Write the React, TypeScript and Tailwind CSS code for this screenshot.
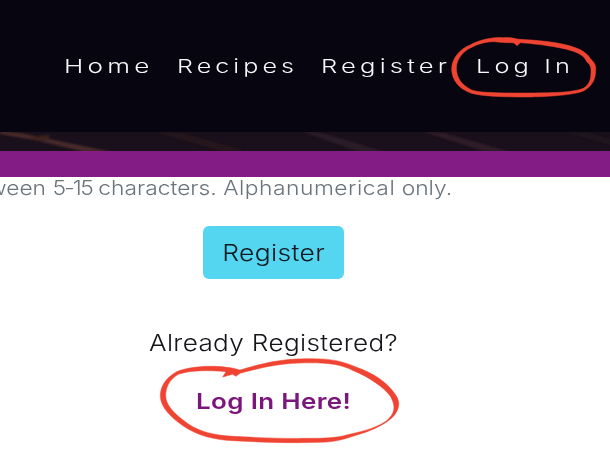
const navItem = "inline-block origin-left whitespace-nowrap tracking-[3px]";

function NavCircle() {
  return (
    <svg className="absolute left-[440px] top-[25px] h-[85px] w-[170px]" viewBox="0 0 510 255" aria-hidden="true">
      <path
        fill="#f04433"
        stroke="#f04433"
        strokeWidth="1.5"
        fillRule="evenodd"
        d="M35 135C34 100 60 72 90 60C125 42 160 36 190 38C215 36 225 42 240 43C300 46 360 52 400 66C430 75 445 90 452 102C462 112 468 118 467 135C467 165 455 185 430 198C400 210 330 215 260 216C190 216 120 214 90 203C55 190 37 165 35 135ZM49 130C50 110 58 90 85 72C115 55 140 50 165 50C190 54 210 52 222 54L231 62L241 53C300 57 370 68 400 79C425 88 435 98 440 110C450 118 454 125 453 140C453 160 450 178 430 190C400 203 330 204 260 204C190 204 120 204 95 195C65 180 50 160 49 130Z"
      />
    </svg>
  );
}

function LinkCircle() {
  return (
    <svg className="absolute left-[140px] top-[320px] h-[136px] w-[270px]" viewBox="0 0 810 408" aria-hidden="true">
      <path
        fill="#f04433"
        stroke="#f04433"
        strokeWidth="1.5"
        fillRule="evenodd"
        d="M61 225C62 200 75 175 110 155C150 138 220 136 260 142C280 144 290 148 300 150C340 138 400 120 470 117C560 113 600 120 650 142C700 160 740 185 765 222C778 240 780 255 770 275C755 305 700 330 660 342C620 355 590 366 540 367C450 370 350 366 280 362C220 360 170 345 130 318C90 290 60 260 61 225ZM77 225C78 205 85 180 115 163C150 150 210 150 258 155L248 171L278 163L288 169L300 160C350 146 410 131 480 129C560 127 600 132 640 152C690 172 735 205 752 230C768 260 765 280 740 302C700 330 650 337 620 345C590 354 550 355 500 355C420 356 330 352 280 349C220 346 180 335 145 312C100 280 77 255 77 225Z"
      />
    </svg>
  );
}

function HeroStrip() {
  return (
    <div className="h-[19px] overflow-hidden bg-[#1a101b]">
      <svg className="block h-[19px] w-[610px]" viewBox="0 0 610 19" aria-hidden="true">
        <defs>
          <filter id="soft" x="-10%" y="-50%" width="120%" height="200%">
            <feGaussianBlur stdDeviation="1.3" />
          </filter>
        </defs>
        <g filter="url(#soft)">
          <path d="M0 -1L20 1L112 20L85 20L40 9L0 2Z" fill="#482c2c" />
          <path d="M30 5L50 3L48 8L36 9Z" fill="#3d211e" />
          <path d="M155 0L185 2L245 19L222 19Z" fill="#26171f" />
          <path d="M300 -1L322 1L386 20L360 20Z" fill="#2c1b25" />
          <path d="M421 -1L444 1L512 20L486 20Z" fill="#2e1c26" />
          <path d="M565 0L588 1L620 10L620 16Z" fill="#1f131e" />
        </g>
      </svg>
    </div>
  );
}

export default function App() {
  return (
    <div className="relative flex h-[456px] w-[610px] flex-col overflow-hidden bg-white font-['Inter',sans-serif]">
      <header className="h-[132px] bg-[#07050f] pl-[64px] pt-[52px] text-[18.5px] font-light leading-[29px] text-[#f8f7fa]">
        <nav className="flex">
          <a className="w-[113px]"><span className={`${navItem} scale-x-[1.41]`}>Home</span></a>
          <a className="w-[144px]"><span className={`${navItem} scale-x-[1.355]`}>Recipes</span></a>
          <a className="w-[155px]"><span className={`${navItem} scale-x-[1.385]`}>Register</span></a>
          <a><span className={`${navItem} scale-x-[1.37]`}>Log In</span></a>
        </nav>
      </header>
      <HeroStrip />
      <div className="h-[26px] bg-[#831c84]" />
      <main className="flex flex-col">
        <div className="flex h-[49px] w-[452px] justify-end">
          <p className="origin-right scale-x-[1.14] whitespace-nowrap text-[20px] font-[350] leading-[23px] text-[#6b747b]">
            ween <span className="tracking-[-1.5px]">5-15</span> characters. <span className="tracking-[0.45px]">Alphanumerical</span> only.
          </p>
        </div>
        <button className="ml-[203px] flex h-[53px] w-[141px] items-center justify-center rounded-[6px] bg-[#55d6f0] text-[23px] text-[#101820]">
          <span className="inline-block scale-x-[1.15] pt-px font-[350] tracking-[0.3px]">Register</span>
        </button>
        <p className="ml-[149px] mt-[47px] origin-left scale-x-[1.136] self-start whitespace-nowrap text-[23px] font-[350] leading-[34px] tracking-[0.3px] text-[#141419]">Already Registered?</p>
        <a className="ml-[196px] mt-[24px] origin-left scale-x-[1.18] self-start whitespace-nowrap text-[22px] font-semibold leading-[34px] tracking-[0.3px] text-[#7b167d]">Log In Here!</a>
      </main>
      <NavCircle />
      <LinkCircle />
    </div>
  );
}
